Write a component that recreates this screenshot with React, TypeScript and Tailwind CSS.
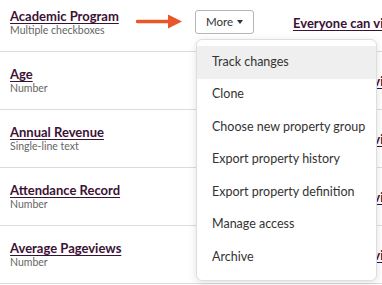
const rows = [
  { name: 'Academic Program', type: 'Multiple checkboxes' },
  { name: 'Age', type: 'Number' },
  { name: 'Annual Revenue', type: 'Single-line text' },
  { name: 'Attendance Record', type: 'Number' },
  { name: 'Average Pageviews', type: 'Number' },
];

const menuItems = [
  'Track changes',
  'Clone',
  'Choose new property group',
  'Export property history',
  'Export property definition',
  'Manage access',
  'Archive',
];

const font = { fontFamily: 'Lato, "Liberation Sans", sans-serif' };

export default function App() {
  return (
    <div className="relative w-[382px] h-[285px] overflow-hidden bg-white" style={font}>
      {rows.map((row, i) => (
        <div
          key={row.name}
          className={`flex items-start border-b border-[#dcdcdc] ${i === 0 ? 'h-[52px] pt-[8px]' : 'h-[58px] pt-[14px]'}`}
        >
          <div className="w-[185px] shrink-0 pl-[10px]">
            <div className="text-[13px] leading-[16px] font-bold text-[#3b1236] underline underline-offset-[2px] decoration-[1px] whitespace-nowrap">
              {row.name}
            </div>
            <div className="text-[10.5px] leading-[13px] text-[#666] whitespace-nowrap">{row.type}</div>
          </div>
          <div className="w-[108px] shrink-0 pl-[10px]">
            {i === 0 && (
              <button className="mt-[2px] h-[24px] w-[59px] rounded-[3px] border border-[#b5b5b5] bg-white text-[11.5px] text-[#333] flex items-center justify-center gap-[4px]">
                More
                <svg width="6" height="4" viewBox="0 0 6 4">
                  <path d="M0 0h6L3 4z" fill="#333" />
                </svg>
              </button>
            )}
          </div>
          <div className="pt-[7px] text-[13px] leading-[16px] font-bold text-[#3b1236] underline underline-offset-[2px] decoration-[1px] whitespace-nowrap">
            Everyone can view
          </div>
        </div>
      ))}

      {/* orange pointer arrow */}
      <svg className="absolute left-[136px] top-[13px]" width="48" height="17" viewBox="0 0 48 17">
        <path d="M1.5 8.5h33" stroke="#e8562a" strokeWidth="3.5" strokeLinecap="round" />
        <path d="M32 1.5L46 8.5L32 15.5z" fill="#e8562a" />
      </svg>

      {/* dropdown menu */}
      <div className="absolute left-[196px] top-[39px] w-[181px] rounded-[6px] border border-[#dedede] bg-white py-[6px] shadow-[0_2px_8px_rgba(0,0,0,0.12)]">
        {menuItems.map((item, i) => (
          <div
            key={item}
            className={`h-[32.5px] flex items-center pl-[15px] text-[12.5px] text-[#333] whitespace-nowrap ${i === 0 ? 'bg-[#efefef]' : ''}`}
          >
            {item}
          </div>
        ))}
      </div>
    </div>
  );
}
